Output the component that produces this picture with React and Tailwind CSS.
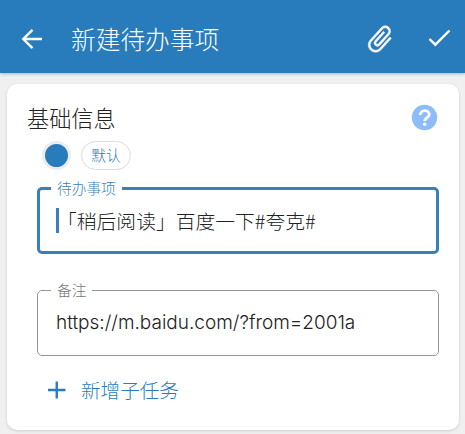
function OutlinedField({ label, value, active }) {
  return (
    <fieldset
      className={
        active
          ? "h-[76px] rounded-[5px] border-[3px] border-[#3a7fb5] px-[11px] text-[#3a7fb5]"
          : "mt-[26px] h-[76px] rounded-[5px] border border-[#959595] px-[13px] text-[#777]"
      }
    >
      <legend className="h-5 px-[6px] text-[14.7px] leading-5 font-light">{label}</legend>
      <div className={active ? "flex h-[45px] items-center pl-[5px]" : "flex h-[47px] items-center pl-[5px]"}>
        {active && <span className="h-[25px] w-[3px] shrink-0 bg-[#3a7fb5]" />}
        <span
          className={
            active
              ? "-ml-[2px] whitespace-nowrap text-[19.8px] font-light text-[#222]"
              : "whitespace-nowrap font-['Inter','Noto_Sans_CJK_SC',sans-serif] text-[19px] font-light text-[#222]"
          }
        >
          {value}
        </span>
      </div>
    </fieldset>
  );
}

export default function App() {
  return (
    <div className="h-[434px] w-[465px] overflow-hidden bg-[#f0f0f0] font-['Noto_Sans_CJK_SC',sans-serif]">
      <header className="flex h-[73px] items-center bg-[#297cbc] pt-[5px] pl-[18px] text-white shadow-[0_1px_3px_rgba(0,0,0,0.25)]">
        <svg width="28" height="28" viewBox="0 0 28 28" fill="none" stroke="currentColor" strokeWidth="2.4">
          <path d="M24 14H5.5M14.5 4.8L5.3 14l9.2 9.2" />
        </svg>
        <h1 className="-mt-[3px] ml-[25px] w-[150px] whitespace-nowrap text-[24.7px] leading-8 font-light">新建待办事项</h1>
        <svg className="ml-[143px]" width="32" height="32" viewBox="0 0 24 24" fill="currentColor" stroke="currentColor" strokeWidth="0.3">
          <g transform="rotate(42 12 12)">
            <path d="M16.5 6v11.5c0 2.21-1.79 4-4 4s-4-1.79-4-4V5a2.5 2.5 0 0 1 5 0v10.5c0 .55-.45 1-1 1s-1-.45-1-1V6H10v9.5a2.5 2.5 0 0 0 5 0V5c0-2.21-1.79-4-4-4S7 2.79 7 5v12.5c0 3.04 2.46 5.5 5.5 5.5s5.5-2.46 5.5-5.5V6h-1.5z" />
          </g>
        </svg>
        <svg className="ml-[29px]" width="28" height="28" viewBox="0 0 28 28" fill="none" stroke="currentColor" strokeWidth="2.4">
          <path d="M4.5 14L10.300 19.700 24.500 5.500" />
        </svg>
      </header>
      <main className="mt-[11px] ml-[7px] h-[346px] w-[452px] rounded-[10px] bg-white pt-[18px] pr-[20px] pl-[20px] shadow-[0_1px_3px_rgba(0,0,0,0.15)]">
        <div className="flex h-[32px] items-center justify-between">
          <h2 className="-mt-[3px] text-[22.2px] leading-8 font-light text-[#222]">基础信息</h2>
          <svg className="mr-[1px] -mt-px" width="27" height="27" viewBox="0 0 27 27">
            <circle cx="13.5" cy="13.5" r="12.7" fill="#8dbcfb" />
            <path d="M9.200 11c0-5.700 9.100-5.700 9.100-.5 0 3.200-4.600 3.200-4.600 6.600" fill="none" stroke="white" strokeWidth="2.800" />
            <circle cx="13.700" cy="20.300" r="1.700" fill="white" />
          </svg>
        </div>
        <div className="mt-[7px] ml-[15px] flex h-[29px] items-center">
          <span className="size-[29px] rounded-full border-[3px] border-[#ececee] bg-[#297cbc]" />
          <span className="ml-[10px] flex h-[29px] w-[50px] items-center justify-center rounded-full border border-[#dcdcdc] text-[14.7px] font-light text-[#297cbc]">
            默认
          </span>
        </div>
        <div className="mt-[8px] ml-[10px] w-[402px]">
          <OutlinedField label="待办事项" value="「稍后阅读」百度一下#夸克#" active />
          <OutlinedField label="备注" value="https://m.baidu.com/?from=2001a" />
        </div>
        <button className="mt-[18px] ml-[20px] flex h-8 items-center text-[#297cbc]">
          <svg width="19" height="18" viewBox="0 0 19 18" stroke="currentColor" strokeWidth="2.4">
            <path d="M1 9h17.500M9.750 0.500v17" />
          </svg>
          <span className="ml-[15px] text-[19.6px] leading-8 font-light">新增子任务</span>
        </button>
      </main>
    </div>
  );
}
